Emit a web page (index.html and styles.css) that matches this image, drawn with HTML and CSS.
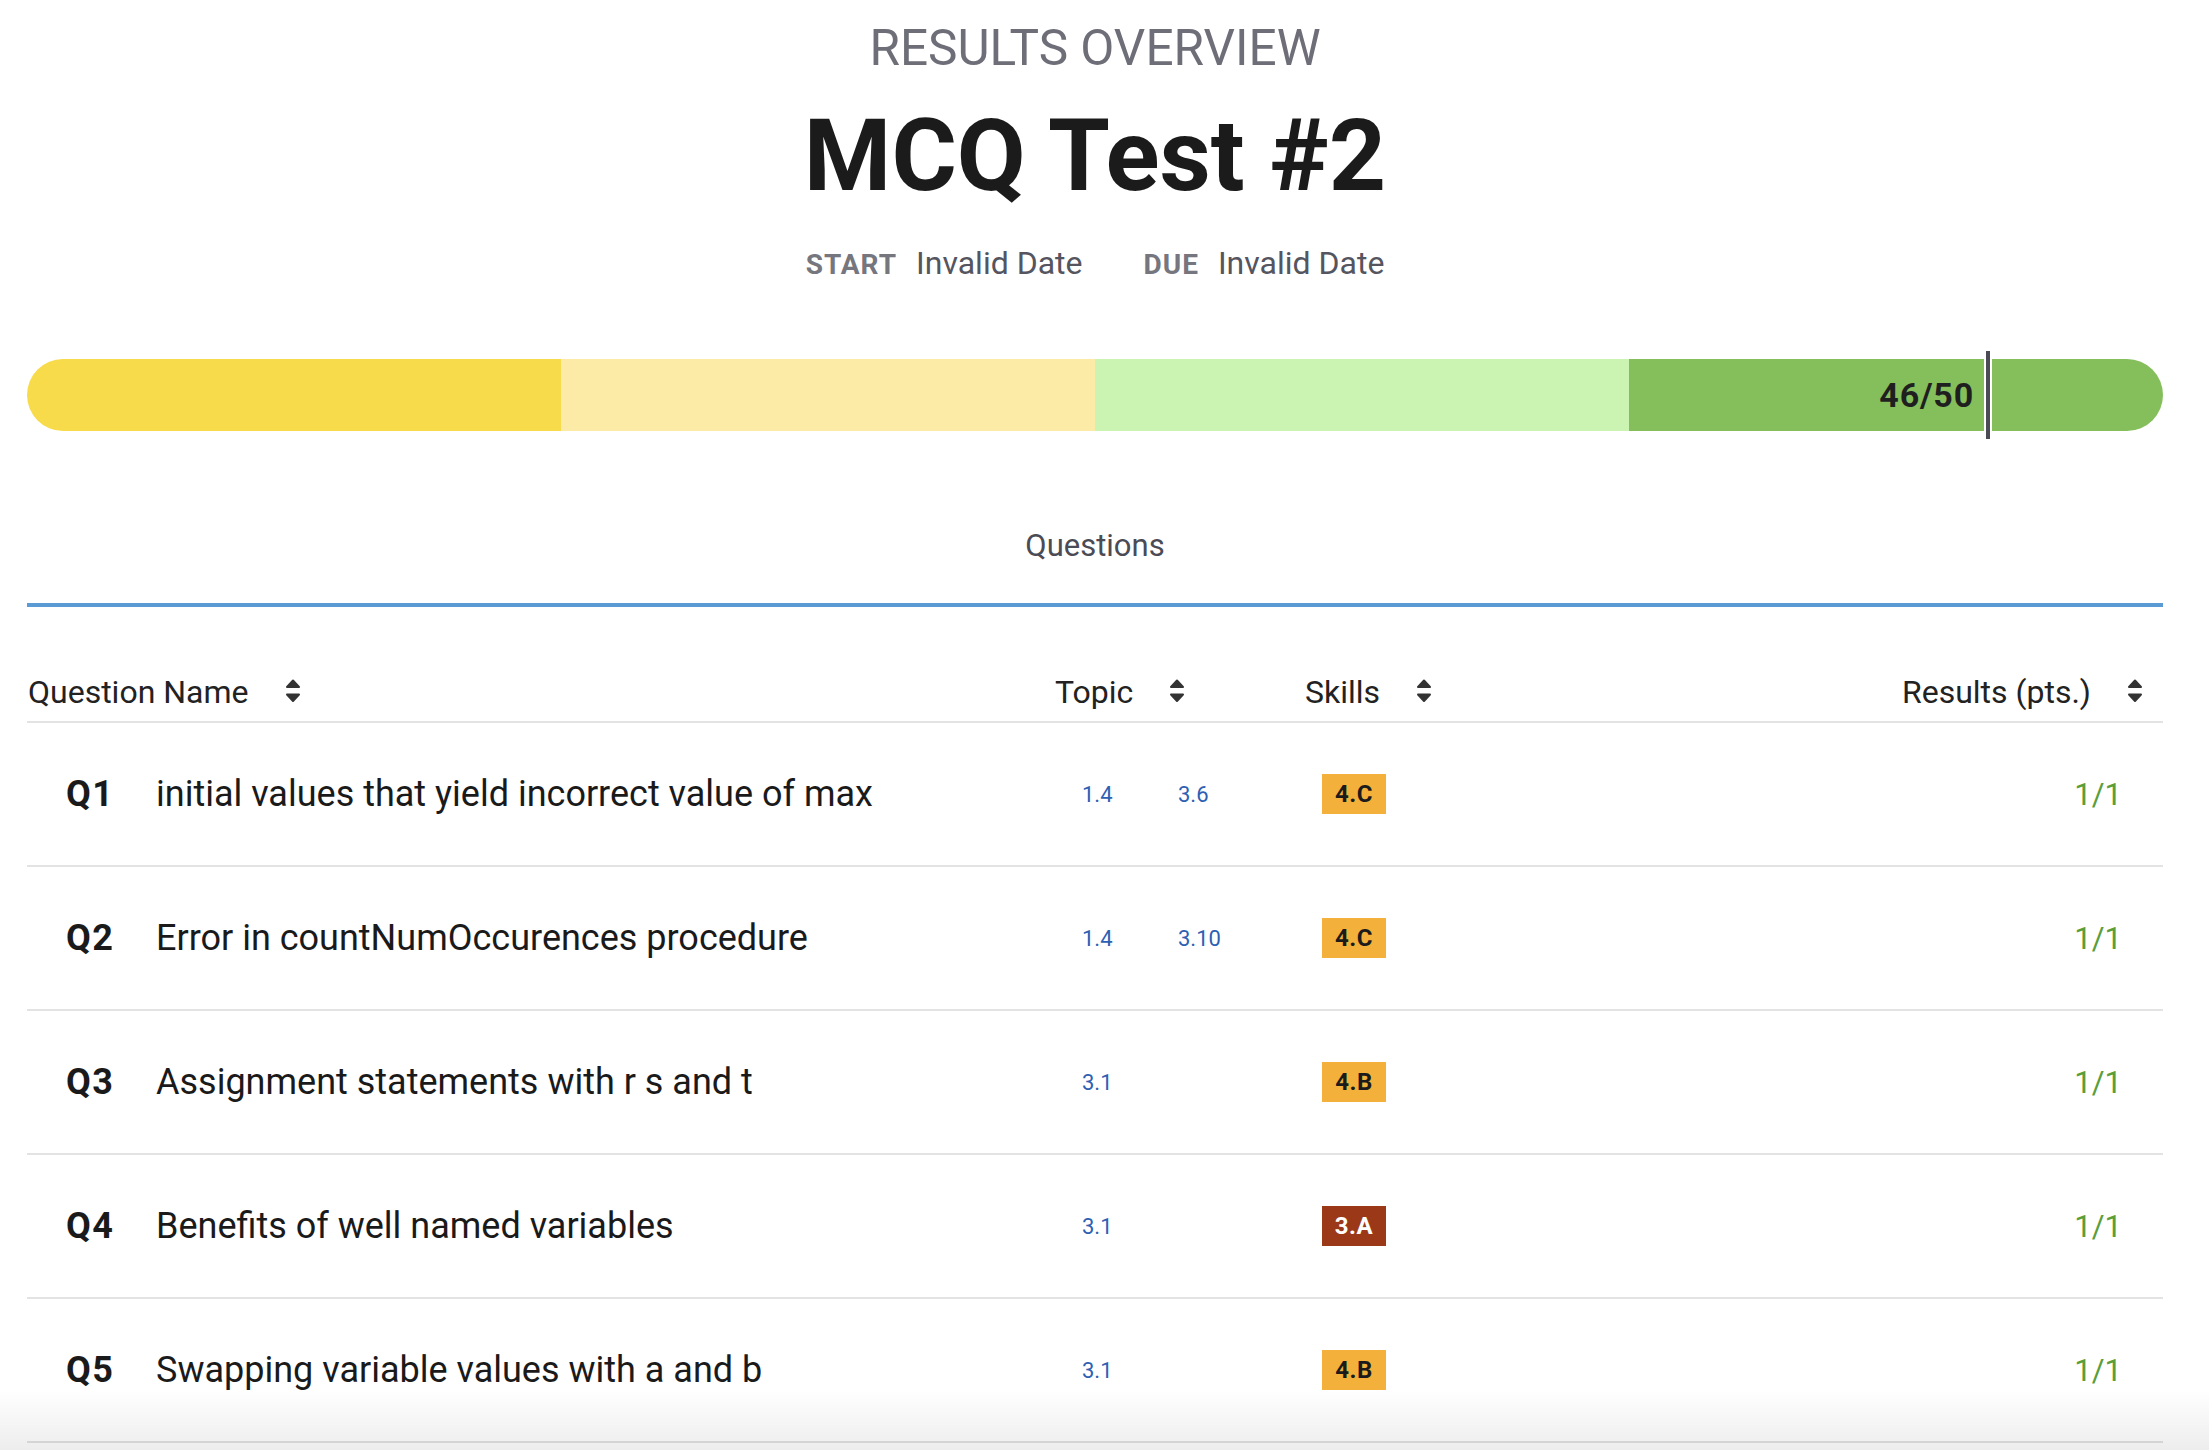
FILE: index.html
```html
<!DOCTYPE html>
<html lang="en">
<head>
<meta charset="utf-8">
<title>Results Overview</title>
<link rel="stylesheet" href="styles.css">
</head>
<body>
<div class="page">
  <header class="head">
    <div class="eyebrow">RESULTS OVERVIEW</div>
    <h1 class="title">MCQ Test #2</h1>
    <div class="dates">
      <span class="date-label">START</span><span class="date-value">Invalid Date</span>
      <span class="date-label due">DUE</span><span class="date-value">Invalid Date</span>
    </div>
  </header>

  <div class="bar">
    <div class="seg seg-1"></div>
    <div class="seg seg-2"></div>
    <div class="seg seg-3"></div>
    <div class="seg seg-4"></div>
    <div class="marker" style="left: 91.62%">
      <span class="score">46/50</span>
    </div>
  </div>

  <nav class="tabs"><span class="tab">Questions</span></nav>

  <div class="table">
    <div class="thead">
      <div class="th"><span>Question Name</span><svg class="sort" viewBox="0 0 16 24"><path d="M2 8 L8 1.5 L14 8 Z M2 15.5 L8 22 L14 15.5 Z"/></svg></div>
      <div class="th"><span>Topic</span><svg class="sort" viewBox="0 0 16 24"><path d="M2 8 L8 1.5 L14 8 Z M2 15.5 L8 22 L14 15.5 Z"/></svg></div>
      <div class="th"><span>Skills</span><svg class="sort" viewBox="0 0 16 24"><path d="M2 8 L8 1.5 L14 8 Z M2 15.5 L8 22 L14 15.5 Z"/></svg></div>
      <div class="th th-right"><span>Results (pts.)</span><svg class="sort" viewBox="0 0 16 24"><path d="M2 8 L8 1.5 L14 8 Z M2 15.5 L8 22 L14 15.5 Z"/></svg></div>
    </div>

    <div class="tr">
      <div class="td name"><span class="qn">Q1</span><span>initial values that yield incorrect value of max</span></div>
      <div class="td topics"><span class="topic">1.4</span><span class="topic">3.6</span></div>
      <div class="td"><span class="skill skill-4">4.C</span></div>
      <div class="td result">1/1</div>
    </div>
    <div class="tr">
      <div class="td name"><span class="qn">Q2</span><span>Error in countNumOccurences procedure</span></div>
      <div class="td topics"><span class="topic">1.4</span><span class="topic">3.10</span></div>
      <div class="td"><span class="skill skill-4">4.C</span></div>
      <div class="td result">1/1</div>
    </div>
    <div class="tr">
      <div class="td name"><span class="qn">Q3</span><span>Assignment statements with r s and t</span></div>
      <div class="td topics"><span class="topic">3.1</span></div>
      <div class="td"><span class="skill skill-4">4.B</span></div>
      <div class="td result">1/1</div>
    </div>
    <div class="tr">
      <div class="td name"><span class="qn">Q4</span><span>Benefits of well named variables</span></div>
      <div class="td topics"><span class="topic">3.1</span></div>
      <div class="td"><span class="skill skill-3">3.A</span></div>
      <div class="td result">1/1</div>
    </div>
    <div class="tr">
      <div class="td name"><span class="qn">Q5</span><span>Swapping variable values with a and b</span></div>
      <div class="td topics"><span class="topic">3.1</span></div>
      <div class="td"><span class="skill skill-4">4.B</span></div>
      <div class="td result">1/1</div>
    </div>
  </div>
</div>
<div class="fade"></div>
</body>
</html>
```

FILE: styles.css
```css
* { box-sizing: border-box; }

html, body {
  margin: 0;
  padding: 0;
  background: #ffffff;
  font-family: Roboto, "Noto Sans", "Liberation Sans", sans-serif;
  color: #1b1b1b;
  overflow: hidden;
}

.page {
  width: 2136px;
  margin-left: 27px;
}

.head {
  display: flex;
  flex-direction: column;
  align-items: center;
  padding-top: 20px;
}

.eyebrow {
  font-size: 49.5px;
  line-height: 56px;
  color: #6e6e78;
  font-weight: 400;
}

.title {
  margin: 25px 0 0;
  font-size: 100px;
  line-height: 110px;
  font-weight: 700;
  color: #1b1b1b;
}

.dates {
  margin-top: 32px;
  display: flex;
  align-items: baseline;
  line-height: 40px;
}

.date-label {
  font-size: 28px;
  font-weight: 700;
  letter-spacing: 1px;
  color: #76767e;
  margin-right: 19px;
}

.date-label.due { margin-left: 61px; }

.date-value {
  font-size: 32px;
  color: #55555f;
}

.bar {
  position: relative;
  margin-top: 74px;
  height: 72px;
  display: flex;
  border-radius: 36px;
}

.seg { flex: 1; }
.seg-1 { background: #f7db4b; border-radius: 36px 0 0 36px; }
.seg-2 { background: #fceaa7; }
.seg-3 { background: #cbf3b2; }
.seg-4 { background: #84bf5c; border-radius: 0 36px 36px 0; }

.marker {
  position: absolute;
  top: -8px;
  width: 8px;
  height: 88px;
  background: #4b4b55;
  border-left: 2px solid #ffffff;
  border-right: 2px solid #ffffff;
}

.score {
  position: absolute;
  right: 16px;
  top: 8px;
  line-height: 72px;
  font-size: 34px;
  font-weight: 700;
  color: #1f1f1f;
  letter-spacing: 0.8px;
}

.tabs {
  margin-top: 95px;
  padding-bottom: 37px;
  border-bottom: 4px solid #5b9bd5;
  text-align: center;
}

.tab {
  font-size: 31px;
  line-height: 40px;
  color: #4b4b55;
}

.table { margin-top: 65px; }

.thead, .tr {
  display: grid;
  grid-template-columns: 1027px 250px 1fr 400px;
}

.thead {
  border-bottom: 2px solid #e3e3e3;
  padding-bottom: 9px;
}

.th {
  display: flex;
  align-items: center;
  gap: 36px;
  font-size: 32px;
  line-height: 40px;
  color: #222222;
  padding-left: 1px;
}

.th-right {
  justify-content: flex-end;
  padding-right: 20px;
}

.sort {
  width: 16px;
  height: 24px;
  fill: #333333;
  stroke: #333333;
  stroke-width: 2;
  stroke-linejoin: round;
  margin-top: -3px;
}

.tr {
  height: 144px;
  border-bottom: 2px solid #e3e3e3;
  align-items: center;
}

.td {
  display: flex;
  align-items: center;
}

.name {
  padding-left: 39px;
  font-size: 36px;
  color: #1a1a1a;
}

.qn {
  width: 90px;
  flex: none;
  font-weight: 700;
  letter-spacing: 1.5px;
}

.topics { padding-left: 28px; }

.topic {
  width: 96px;
  font-size: 22px;
  color: #2d5fb3;
}

.skill {
  display: inline-block;
  min-width: 64px;
  text-align: center;
  height: 40px;
  line-height: 40px;
  padding: 0 12px;
  margin-left: 18px;
  font-size: 24px;
  font-weight: 700;
  letter-spacing: 0.5px;
}

.skill-4 { background: #f3b13c; color: #1b1b1b; }
.skill-3 { background: #9b3817; color: #ffffff; }

.result {
  justify-content: flex-end;
  padding-right: 41px;
  font-size: 31px;
  color: #5a9e3a;
}

.fade {
  position: fixed;
  left: 0;
  right: 0;
  bottom: 0;
  height: 60px;
  pointer-events: none;
  background: linear-gradient(to bottom, rgba(0,0,0,0), rgba(0,0,0,0.07));
}
```
